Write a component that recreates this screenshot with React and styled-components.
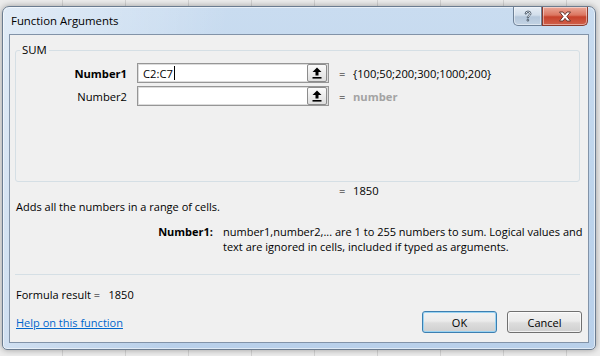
import React from 'react';
import styled, { createGlobalStyle } from 'styled-components';

const Global = createGlobalStyle`
  html, body { margin: 0; padding: 0; }
  body {
    width: 600px;
    height: 356px;
    overflow: hidden;
    font-family: "Open Sans", "Noto Sans", sans-serif;
    font-size: 11px;
    color: #000;
  }
`;

const Desk = styled.div`
  width: 600px;
  height: 356px;
  box-sizing: border-box;
  padding: 6px 0 0 2px;
  background-color: #ececec;
  background-image: repeating-linear-gradient(90deg, transparent 0 62px, #d2d2d2 62px 63px);
`;

const Window = styled.div`
  width: 594px;
  height: 344px;
  box-sizing: border-box;
  display: flex;
  flex-direction: column;
  padding: 0 6px 6px 6px;
  border: 1px solid #6b7c90;
  border-radius: 7px 7px 5px 5px;
  background:
    linear-gradient(100deg, rgba(255,255,255,0.45) 0%, rgba(255,255,255,0) 35%),
    linear-gradient(180deg, #c9dcf0 0%, #bcd3eb 60%, #b9d0ea 100%);
  box-shadow: 0 0 6px rgba(0,0,0,0.35), inset 0 0 0 1px rgba(255,255,255,0.55);
`;

const TitleBar = styled.div`
  height: 27px;
  display: flex;
  align-items: flex-start;
`;

const Title = styled.div`
  flex: 1;
  padding: 6px 0 0 2px;
  font-size: 11.4px;
  line-height: 15px;
  color: #000;
`;

const CaptionBtn = styled.div`
  height: 19px;
  width: ${p => p.$w}px;
  box-sizing: border-box;
  display: flex;
  align-items: center;
  justify-content: center;
  border: 1px solid ${p => (p.$close ? '#8a3a2c' : '#6e8197')};
  border-top: none;
  background: ${p => (p.$close
    ? 'linear-gradient(180deg, #eaa899 0%, #dc7661 45%, #c7422c 55%, #d0604a 100%)'
    : 'linear-gradient(180deg, #e6edf5 0%, #d2deeb 45%, #b5c7db 55%, #c3d3e4 100%)')};
  border-radius: ${p => (p.$close ? '0 0 5px 0' : '0 0 0 5px')};
  box-shadow: inset 0 0 0 1px rgba(255,255,255,0.45);
  margin-right: ${p => (p.$close ? '1px' : '0')};
`;

const Client = styled.div`
  flex: 1;
  display: flex;
  flex-direction: column;
  background: #f0f0f0;
  border: 1px solid #8293a8;
`;

const Group = styled.fieldset`
  margin: 8px 8px 0 5px;
  padding: 6px 0 0 0;
  border: 1px solid #d5dfe5;
  border-radius: 3px;
  min-width: 0;
`;

const Legend = styled.legend`
  margin-left: 4px;
  padding: 0 2px;
  font-size: 11.4px;
  line-height: 14px;
`;

const ArgGrid = styled.div`
  height: 118px;
  display: grid;
  grid-template-columns: 121px 192px 24px 1fr;
  grid-auto-rows: 20px;
  row-gap: 3px;
  align-content: start;
  align-items: center;
  font-size: 11.2px;
`;

const ArgLabel = styled.div`
  text-align: right;
  padding-right: 10px;
  font-weight: ${p => (p.$bold ? 700 : 400)};
`;

const RefEdit = styled.div`
  height: 20px;
  box-sizing: border-box;
  display: flex;
  align-items: center;
  background: #fff;
  border: 1px solid #969696;
  box-shadow: inset 0 0 0 1px #dcdcdc;
  padding: 0 1px 0 5px;
`;

const RefText = styled.div`
  flex: 1;
  display: flex;
  align-items: center;
`;

const Caret = styled.span`
  display: inline-block;
  width: 1px;
  height: 14px;
  background: #000;
  margin-left: 1px;
`;

const CollapseBtn = styled.div`
  width: 20px;
  height: 18px;
  box-sizing: border-box;
  display: flex;
  align-items: center;
  justify-content: center;
  border: 1px solid #8c8c8c;
  border-radius: 2px;
  background: linear-gradient(180deg, #fbfbfb 0%, #ececec 50%, #dedede 100%);
`;

const Eq = styled.div`
  width: 24px;
  box-sizing: border-box;
  padding-left: 10px;
`;

const Value = styled.div`
  white-space: nowrap;
  color: ${p => (p.$hint ? '#a3a3a3' : '#000')};
  font-weight: ${p => (p.$hint ? 700 : 400)};
`;

const ResultRow = styled.div`
  display: flex;
  align-items: center;
  height: 15px;
  margin-top: 1px;
  padding-left: 319px;
  font-size: 11.2px;
`;

const Para = styled.div`
  line-height: 15px;
  margin: ${p => p.$m || '0'};
  white-space: nowrap;
`;

const HelpGrid = styled.div`
  display: grid;
  grid-template-columns: 203px 1fr;
  column-gap: 10px;
  margin-top: 10px;
  line-height: 15px;
`;

const HelpLabel = styled.div`
  text-align: right;
  font-weight: 700;
`;

const HelpText = styled.div`
  white-space: nowrap;
`;

const Divider = styled.div`
  height: 1px;
  background: #d5dfe5;
  margin: 20px 8px 0 5px;
`;

const Footer = styled.div`
  display: flex;
  align-items: center;
  height: 22px;
  margin-top: 9px;
  padding: 0 6px 0 6px;
`;

const HelpLink = styled.a`
  flex: 1;
  color: #0066cc;
  text-decoration: underline;
`;

const Button = styled.div`
  width: 75px;
  height: 22px;
  box-sizing: border-box;
  display: flex;
  align-items: center;
  justify-content: center;
  margin-left: ${p => (p.$first ? '0' : '10px')};
  border: 1px solid ${p => (p.$default ? '#3c7fb1' : '#707070')};
  border-radius: 3px;
  background: linear-gradient(180deg, #f2f2f2 0%, #ebebeb 45%, #dddddd 55%, #cfcfcf 100%);
  box-shadow: ${p => (p.$default
    ? 'inset 0 0 0 1px #9ad3f2'
    : 'inset 0 0 0 1px rgba(255,255,255,0.7)')};
`;

const UpArrow = () => (
  <svg width="10" height="12" viewBox="0 0 10 12">
    <path d="M5 0.5 L9.5 5 L6.5 5 L6.5 8.5 L3.5 8.5 L3.5 5 L0.5 5 Z" fill="#000" />
    <rect x="0.5" y="10" width="9" height="1.6" fill="#000" />
  </svg>
);

const HelpGlyph = () => (
  <svg width="10" height="13" viewBox="0 0 10 13">
    <path
      d="M2 4 Q2 1 5 1 Q8 1 8 3.6 Q8 5.2 6.3 6.2 Q5.4 6.8 5.4 8 L4.2 8 Q4.1 6.3 5.3 5.5 Q6.4 4.8 6.4 3.7 Q6.4 2.4 5 2.4 Q3.6 2.4 3.5 4 Z M4.1 9.4 L5.6 9.4 L5.6 11 L4.1 11 Z"
      fill="#fff"
      stroke="#4b5a6b"
      strokeWidth="0.9"
      strokeLinejoin="round"
    />
  </svg>
);

const CloseGlyph = () => (
  <svg width="14" height="11" viewBox="0 0 14 11">
    <path
      d="M1.5 1 L5 1 L7 3.6 L9 1 L12.5 1 L8.9 5.5 L12.5 10 L9 10 L7 7.4 L5 10 L1.5 10 L5.1 5.5 Z"
      fill="#fff"
      stroke="#5a2a22"
      strokeWidth="0.9"
      strokeLinejoin="round"
    />
  </svg>
);

const args = [
  { name: 'Number1', text: 'C2:C7', focus: true, value: '{100;50;200;300;1000;200}' },
  { name: 'Number2', text: '', focus: false, value: 'number', hint: true },
];

export default function App() {
  return (
    <>
      <Global />
      <Desk>
        <Window>
          <TitleBar>
            <Title>Function Arguments</Title>
            <CaptionBtn $w={29}><HelpGlyph /></CaptionBtn>
            <CaptionBtn $w={46} $close><CloseGlyph /></CaptionBtn>
          </TitleBar>
          <Client>
            <Group>
              <Legend>SUM</Legend>
              <ArgGrid>
                {args.map(a => (
                  <React.Fragment key={a.name}>
                    <ArgLabel $bold={a.focus}>{a.name}</ArgLabel>
                    <RefEdit>
                      <RefText>
                        {a.text}
                        {a.focus && <Caret />}
                      </RefText>
                      <CollapseBtn><UpArrow /></CollapseBtn>
                    </RefEdit>
                    <Eq>=</Eq>
                    <Value $hint={a.hint}>{a.value}</Value>
                  </React.Fragment>
                ))}
              </ArgGrid>
            </Group>
            <ResultRow>
              <Eq>=</Eq>
              <Value>1850</Value>
            </ResultRow>
            <Para $m="1px 0 0 6px">Adds all the numbers in a range of cells.</Para>
            <HelpGrid>
              <HelpLabel>Number1:</HelpLabel>
              <HelpText>
                number1,number2,... are 1 to 255 numbers to sum. Logical values and
                <br />
                text are ignored in cells, included if typed as arguments.
              </HelpText>
            </HelpGrid>
            <Divider />
            <Para $m="12px 0 0 6px">
              Formula result =&nbsp;&nbsp;&nbsp;1850
            </Para>
            <Footer>
              <HelpLink>Help on this function</HelpLink>
              <Button $default $first>OK</Button>
              <Button>Cancel</Button>
            </Footer>
          </Client>
        </Window>
      </Desk>
    </>
  );
}
